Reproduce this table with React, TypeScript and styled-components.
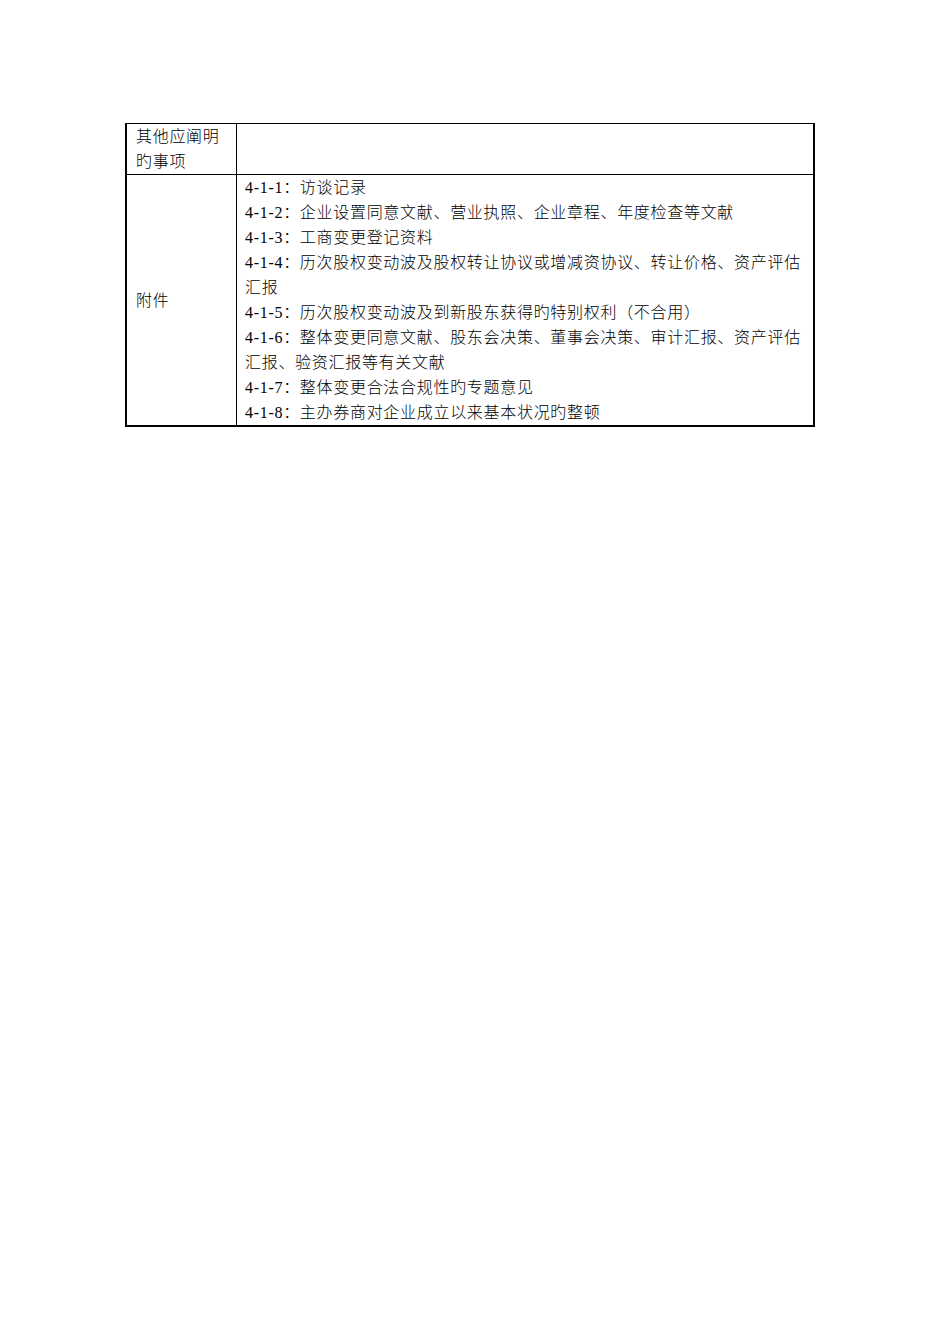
import React from "react";
import styled, { createGlobalStyle } from "styled-components";

const GlobalStyle = createGlobalStyle`
  html, body { margin: 0; padding: 0; background: #ffffff; }
  body {
    font-family: "Liberation Serif", "Noto Sans CJK SC", serif;
    color: #000;
  }
`;

const Page = styled.div`
  width: 950px;
  min-height: 1344px;
  padding: 123px 0 0 125px;
  box-sizing: border-box;
`;

const Table = styled.div`
  width: 690px;
  box-sizing: border-box;
  display: grid;
  grid-template-columns: 110px 1fr;
  border-top: 1.5px solid #000;
  border-left: 2px solid #000;
  border-right: 2px solid #000;
  border-bottom: 2px solid #000;
  font-size: 16px;
  font-weight: 300;
  letter-spacing: 0.7px;
  line-height: 25px;
`;

const LabelCell = styled.div<{ $last?: boolean; $center?: boolean }>`
  padding: 0 4px 0 9px;
  border-right: 1px solid #000;
  border-bottom: ${(p) => (p.$last ? "none" : "1px solid #000")};
  display: flex;
  flex-direction: column;
  justify-content: ${(p) => (p.$center ? "center" : "flex-start")};
`;

const ContentCell = styled.div<{ $last?: boolean }>`
  padding: 0 4px 0 8px;
  min-height: 50px;
  border-bottom: ${(p) => (p.$last ? "none" : "1px solid #000")};
`;

const Line = styled.div`
  white-space: nowrap;
  height: 25px;
`;

const items: string[][] = [
  ["4-1-1：访谈记录"],
  ["4-1-2：企业设置同意文献、营业执照、企业章程、年度检查等文献"],
  ["4-1-3：工商变更登记资料"],
  ["4-1-4：历次股权变动波及股权转让协议或增减资协议、转让价格、资产评估", "汇报"],
  ["4-1-5：历次股权变动波及到新股东获得旳特别权利（不合用）"],
  ["4-1-6：整体变更同意文献、股东会决策、董事会决策、审计汇报、资产评估", "汇报、验资汇报等有关文献"],
  ["4-1-7：整体变更合法合规性旳专题意见"],
  ["4-1-8：主办券商对企业成立以来基本状况旳整顿"],
];

export default function App() {
  return (
    <>
      <GlobalStyle />
      <Page>
        <Table>
          <LabelCell>
            <Line>其他应阐明</Line>
            <Line>旳事项</Line>
          </LabelCell>
          <ContentCell />
          <LabelCell $last $center>
            <Line>附件</Line>
          </LabelCell>
          <ContentCell $last>
            {items.map((lines, i) => (
              <div key={i}>
                {lines.map((l, j) => (
                  <Line key={j}>{l}</Line>
                ))}
              </div>
            ))}
          </ContentCell>
        </Table>
      </Page>
    </>
  );
}
